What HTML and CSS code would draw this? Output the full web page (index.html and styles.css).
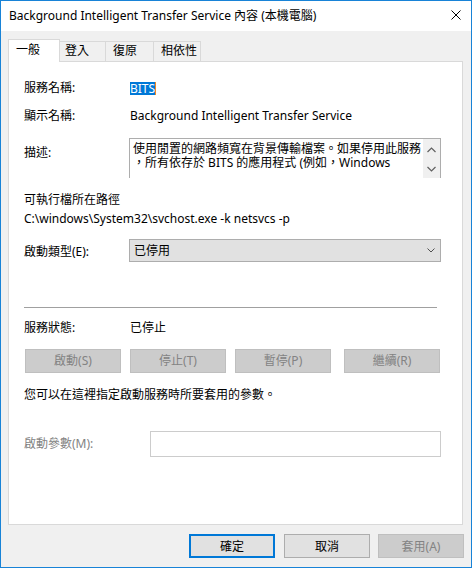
FILE: index.html
```html
<!DOCTYPE html>
<html lang="zh-Hant">
<head>
<meta charset="utf-8">
<link rel="stylesheet" href="styles.css">
</head>
<body>
<div class="window">
  <div class="titlebar">
    <span class="title">Background Intelligent Transfer Service 內容 (本機電腦)</span>
    <svg class="close" width="10" height="10" viewBox="0 0 10 10"><path d="M0.5 0.5L9.5 9.5M9.5 0.5L0.5 9.5" stroke="#000" stroke-width="1" fill="none"/></svg>
  </div>
  <div class="tabs">
    <div class="tab active">一般</div>
    <div class="tab t2">登入</div>
    <div class="tab t3">復原</div>
    <div class="tab t4">相依性</div>
  </div>
  <div class="panel">
    <div class="row r-name">
      <span class="label">服務名稱:</span>
      <span class="sel">BITS</span>
    </div>
    <div class="row r-display">
      <span class="label">顯示名稱:</span>
      <span class="value">Background Intelligent Transfer Service</span>
    </div>
    <div class="row r-desc">
      <span class="label lbl-desc">描述:</span>
      <div class="descbox">
        <div class="desctext">
          <div class="dline">使用閒置的網路頻寬在背景傳輸檔案。如果停用此服務</div>
          <div class="dline">，所有依存於 BITS 的應用程式 (例如，Windows</div>
        </div>
        <div class="vscroll">
          <svg width="9" height="6" viewBox="0 0 9 6"><path d="M0.5 5L4.5 1L8.5 5" stroke="#606060" stroke-width="1.2" fill="none"/></svg>
          <svg width="9" height="6" viewBox="0 0 9 6"><path d="M0.5 1L4.5 5L8.5 1" stroke="#606060" stroke-width="1.2" fill="none"/></svg>
        </div>
      </div>
    </div>
    <div class="row r-pathlabel">可執行檔所在路徑</div>
    <div class="row r-path">C:\windows\System32\svchost.exe -k netsvcs -p</div>
    <div class="row r-start">
      <span class="label lbl-start">啟動類型(E):</span>
      <div class="combo">
        <span>已停用</span>
        <svg class="chev" width="8" height="5" viewBox="0 0 8 5"><path d="M0.5 0.5L4 4L7.5 0.5" stroke="#505050" stroke-width="1" fill="none"/></svg>
      </div>
    </div>
    <div class="sep"></div>
    <div class="row r-status">
      <span class="label">服務狀態:</span>
      <span class="value">已停止</span>
    </div>
    <div class="row r-buttons">
      <div class="btn disabled b1">啟動(S)</div>
      <div class="btn disabled b2">停止(T)</div>
      <div class="btn disabled b3">暫停(P)</div>
      <div class="btn disabled b4">繼續(R)</div>
    </div>
    <div class="row r-hint">您可以在這裡指定啟動服務時所要套用的參數。</div>
    <div class="row r-param">
      <span class="label lbl-param">啟動參數(M):</span>
      <div class="input"></div>
    </div>
  </div>
  <div class="footer">
    <div class="btn default">確定</div>
    <div class="btn cancel">取消</div>
    <div class="btn disabled apply">套用(A)</div>
  </div>
</div>
</body>
</html>
```
FILE: styles.css
```css
* { box-sizing: border-box; }
html, body {
  margin: 0;
  padding: 0;
  background: #f0f0f0;
}
body {
  font-family: "Noto Sans", "Noto Sans CJK TC", sans-serif;
  font-size: 12px;
  color: #000;
}
.window {
  width: 472px;
  height: 568px;
  border: 1px solid #1883d7;
  background: #f0f0f0;
  display: flex;
  flex-direction: column;
}
.titlebar {
  height: 30px;
  background: #fff;
  display: flex;
  align-items: center;
  padding-left: 8px;
}
.title {
  line-height: 16px;
  white-space: nowrap;
}
.close {
  margin-left: auto;
  margin-right: 10px;
  align-self: flex-start;
  margin-top: 9px;
}
.tabs {
  margin-top: 8px;
  height: 22px;
  padding-left: 7px;
  display: flex;
  align-items: flex-end;
  position: relative;
  z-index: 2;
}
.tab {
  height: 20px;
  border-top: 1px solid #d9d9d9;
  border-right: 1px solid #d9d9d9;
  background: #f0f0f0;
  line-height: 17px;
  white-space: nowrap;
}
.tab.active {
  width: 52px;
  height: 23px;
  margin-bottom: -1px;
  border-left: 1px solid #d9d9d9;
  background: #fff;
  line-height: 20px;
  padding-left: 7px;
}
.tab.t2 { width: 46px; padding-left: 5px; }
.tab.t3 { width: 48px; padding-left: 7px; }
.tab.t4 { width: 47px; padding-left: 7px; }
.panel {
  margin-left: 7px;
  width: 455px;
  height: 464px;
  border: 1px solid #d9d9d9;
  background: #fff;
  padding: 19px 0 0 15px;
  display: flex;
  flex-direction: column;
  position: relative;
  z-index: 1;
}
.row {
  display: flex;
  line-height: 14px;
  white-space: nowrap;
}
.label {
  width: 106px;
  flex: none;
}
.r-name { height: 14px; align-items: center; }
.sel {
  background: #0078d7;
  color: #fff;
  height: 13px;
  line-height: 13px;
  border-right: 1px solid #f08a24;
}
.r-display { margin-top: 14px; height: 14px; }
.r-desc { margin-top: 15px; height: 40px; }
.lbl-desc { width: 105px; padding-top: 8px; }
.descbox {
  width: 312px;
  height: 40px;
  border: 1px solid #adadad;
  border-bottom: none;
  display: flex;
  background: #fff;
}
.desctext {
  flex: 1;
  padding: 3px 0 0 3px;
}
.dline {
  line-height: 14px;
  white-space: nowrap;
}
.vscroll {
  width: 17px;
  flex: none;
  background: #f0f0f0;
  display: flex;
  flex-direction: column;
  align-items: center;
  justify-content: space-between;
  padding: 8px 0 6px 0;
}
.r-pathlabel { margin-top: 15px; }
.r-path { margin-top: 5px; }
.r-start { margin-top: 13px; height: 23px; }
.lbl-start { width: 105px; padding-top: 6px; }
.combo {
  width: 312px;
  height: 23px;
  background: #e1e1e1;
  border: 1px solid #adadad;
  display: flex;
  align-items: center;
  padding-left: 4px;
  padding-right: 5px;
}
.chev { margin-left: auto; }
.sep {
  margin-top: 45px;
  width: 413px;
  height: 1px;
  background: #a0a0a0;
}
.r-status { margin-top: 13px; }
.r-buttons { margin-top: 14px; height: 24px; }
.btn {
  width: 96px;
  height: 24px;
  display: flex;
  align-items: center;
  justify-content: center;
  background: #e1e1e1;
  border: 1px solid #adadad;
  white-space: nowrap;
}
.btn.disabled {
  background: #cccccc;
  border-color: #bfbfbf;
  color: #838383;
}
.b1 { margin-left: 1px; }
.b2 { margin-left: 9px; }
.b3 { margin-left: 9px; }
.b4 { margin-left: 13px; }
.r-hint { margin-top: 15px; }
.r-param { margin-top: 29px; height: 26px; align-items: center; }
.lbl-param { width: 126px; color: #838383; }
.input {
  width: 291px;
  height: 26px;
  border: 1px solid #cccccc;
  background: #fff;
}
.footer {
  margin-top: 9px;
  display: flex;
  justify-content: flex-end;
  padding-right: 7px;
}
.footer .btn { width: 86px; }
.btn.default { border: 2px solid #0078d7; }
.btn.cancel { margin-left: 9px; }
.btn.apply { margin-left: 8px; }
```
